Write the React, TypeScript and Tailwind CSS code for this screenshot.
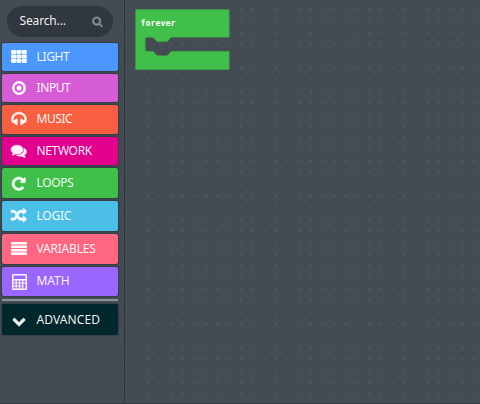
import type { ReactNode } from "react";

function Glyph({ d, className }: { d: string; className: string }) {
  return (
    <svg
      viewBox="0 0 1792 1792"
      className={`overflow-visible ${className}`}
      fill="currentColor"
      stroke="currentColor"
      strokeWidth="70"
      strokeLinejoin="round"
      aria-hidden="true"
    >
      <path d={d} />
    </svg>
  );
}

const SEARCH =
  "M1216 832q0-185-131.5-316.5t-316.5-131.5-316.5 131.5-131.5 316.5 131.5 316.5 316.5 131.5 316.5-131.5 131.5-316.5zm512 832q0 52-38 90t-90 38q-54 0-90-38l-343-342q-179 124-399 124-143 0-273.5-55.5t-225-150-150-225-55.5-273.5 55.5-273.5 150-225 225-150 273.5-55.5 273.5 55.5 225 150 150 225 55.5 273.5q0 220-124 399l343 343q37 37 37 90z";
const HEADPHONES =
  "M1728 886q0 166-60 314l-20 49-185 33q-22 83-90.5 136.5t-156.5 53.5v32q0 14-9 23t-23 9h-64q-14 0-23-9t-9-23v-576q0-14 9-23t23-9h64q14 0 23 9t9 23v32q71 0 130 35.5t93 95.5l68-12q29-95 29-193 0-148-88-279t-236.5-209-315.5-78-315.5 78-236.5 209-88 279q0 98 29 193l68 12q34-60 93-95.5t130-35.5v-32q0-14 9-23t23-9h64q14 0 23 9t9 23v576q0 14-9 23t-23 9h-64q-14 0-23-9t-9-23v-32q-88 0-156.5-53.5t-90.5-136.5l-185-33-20-49q-60-148-60-314 0-151 67-291t179-242.5 266-163.5 320-61 320 61 266 163.5 179 242.5 67 291z";
const COMMENTS =
  "M1408 768q0 139-94 257t-256.5 186.5-353.5 68.5q-86 0-176-16-124 88-278 128-36 9-86 16h-3q-11 0-20.5-8t-11.5-21q-1-3-1-6.5t.5-6.5 2-6l2.5-5 3.5-5.5 4-5 4.5-5 4-4.5q5-6 23-25t26-29.5 22.5-29 25-38.5 20.5-44q-124-72-195-177t-71-224q0-139 94-257t256.5-186.5 353.5-68.5 353.5 68.5 256.5 186.5 94 257zm384 256q0 120-71 224.5t-195 176.5q10 24 20.5 44t25 38.5 22.5 29 26 29.5 23 25q1 1 4 4.5t4.5 5 4 5 3.5 5.5l2.5 5 2 6 .5 6.5-1 6.5q-3 14-13 22t-22 7q-50-7-86-16-154-40-278-128-90 16-176 16-271 0-472-132 58 4 88 4 161 0 309-45t264-129q125-92 192-212t67-254q0-77-23-152 129 71 204 178t75 230z";
const REPEAT =
  "M1664 256v448q0 26-19 45t-45 19h-448q-42 0-59-40-17-39 14-69l138-138q-148-137-349-137-104 0-198.5 40.5t-163.5 109.5-109.5 163.5-40.5 198.5 40.5 198.5 109.5 163.5 163.5 109.5 198.5 40.5q119 0 225-52t179-147q7-10 23-12 15 0 25 9l137 138q9 8 9.5 20.5t-7.5 22.5q-109 132-264 204.5t-327 72.5q-156 0-298-61t-245-164-164-245-61-298 61-298 164-245 245-164 298-61q147 0 284.5 55.5t244.5 156.5l130-129q29-31 70-14 39 17 39 59z";
const RANDOM =
  "M666 481q-60 92-137 273-22-45-37-72.5t-40.5-63.5-51-56.5-63-35-81.5-14.5h-224q-14 0-23-9t-9-23v-192q0-14 9-23t23-9h224q250 0 410 225zm1126 799q0 14-9 23l-320 320q-9 9-23 9-13 0-22.5-9.5t-9.5-22.5v-192q-32 0-85 .5t-81 1-73-1-71-5-64-10.5-63-18.5-58-28.5-59-40-55-53.5-56-69.5q59-93 136-273 22 45 37 72.5t40.5 63.5 51 56.5 63 35 81.5 14.5h256v-192q0-14 9-23t23-9q12 0 24 10l319 319q9 9 9 23zm0-896q0 14-9 23l-320 320q-9 9-23 9-13 0-22.5-9.5t-9.5-22.5v-192h-256q-48 0-87 15t-69 45-51 61.5-45 77.5q-32 62-78 171-29 66-49.5 111t-54 105-64 100-74 83-90 68.5-106.5 42-128 16.5h-224q-14 0-23-9t-9-23v-192q0-14 9-23t23-9h224q48 0 87-15t69-45 51-61.5 45-77.5q32-62 78-171 29-66 49.5-111t54-105 64-100 74-83 90-68.5 106.5-42 128-16.5h256v-192q0-14 9-23t23-9q12 0 24 10l319 319q9 9 9 23z";
const CHEVRON =
  "M1683 808l-742 741q-19 19-45 19t-45-19l-742-741q-19-19-19-45.5t19-45.5l166-165q19-19 45-19t45 19l531 531 531-531q19-19 45-19t45 19l166 165q19 19 19 45.5t-19 45.5z";

function GridIcon() {
  return (
    <svg viewBox="0 0 16 13" className="-mt-px h-[13px] w-4" fill="currentColor">
      {[0, 4.4, 8.8].map((y) =>
        [0, 5.4, 10.8].map((x) => <rect key={`${x}-${y}`} x={x} y={y} width="5.1" height="4.1" rx="1.1" />),
      )}
    </svg>
  );
}

function TargetIcon() {
  return (
    <svg viewBox="0 0 14 14" className="size-3.5">
      <circle cx="7" cy="7" r="5.7" fill="none" stroke="currentColor" strokeWidth="2.4" />
      <circle cx="7" cy="7" r="2.5" fill="currentColor" />
    </svg>
  );
}

function LinesIcon() {
  return (
    <svg viewBox="0 0 16 13" className="h-[13px] w-4" fill="currentColor">
      {[0, 3.45, 6.9, 10.35].map((y) => (
        <rect key={y} y={y} width="16" height="2.6" rx="0.4" />
      ))}
    </svg>
  );
}

function CalculatorIcon() {
  return (
    <svg viewBox="0 0 15 16" className="mt-px h-4 w-[15px]">
      <path
        fill="currentColor"
        fillRule="evenodd"
        d="M1.5 0H13.5Q15 0 15 1.5V14.5Q15 16 13.5 16H1.5Q0 16 0 14.5V1.5Q0 0 1.5 0ZM1.5 1.6V5H13.5V1.6ZM1.5 6.6V8.4H3.6V6.6ZM4.8 6.6V8.4H6.9V6.6ZM8.1 6.6V8.4H10.2V6.6ZM11.4 6.6V8.4H13.5V6.6ZM1.5 9.6V11.4H3.6V9.6ZM4.8 9.6V11.4H6.9V9.6ZM8.1 9.6V11.4H10.2V9.6ZM1.5 12.6V14.4H3.6V12.6ZM4.8 12.6V14.4H6.9V12.6ZM8.1 12.6V14.4H10.2V12.6ZM11.4 9.6V14.4H13.5V9.6Z"
      />
    </svg>
  );
}

type CategoryProps = { label: string; box: string; text: string; icon: ReactNode };

const categories: CategoryProps[] = [
  { label: "LIGHT", box: "h-7 mb-[3px] bg-[#4c97ff]", text: "tracking-[-0.35px]", icon: <GridIcon /> },
  { label: "INPUT", box: "h-7 mb-[3px] bg-[#d65cd6]", text: "tracking-[-0.4px]", icon: <TargetIcon /> },
  { label: "MUSIC", box: "h-[28.5px] mb-[3px] bg-[#f85f40]", text: "tracking-[-0.45px]", icon: <Glyph d={HEADPHONES} className="size-4" /> },
  { label: "NETWORK", box: "h-[28.5px] mb-[3px] bg-[#e3008c]", text: "tracking-[-0.35px]", icon: <Glyph d={COMMENTS} className="size-[15.5px]" /> },
  { label: "LOOPS", box: "h-[29.5px] mb-[3.5px] bg-[#40bf4a]", text: "tracking-[-0.35px]", icon: <Glyph d={REPEAT} className="mt-px size-[15.5px]" /> },
  { label: "LOGIC", box: "h-[29.5px] mb-[3.5px] bg-[#4cbfe6]", text: "tracking-[-0.25px]", icon: <Glyph d={RANDOM} className="size-[15.5px]" /> },
  { label: "VARIABLES", box: "h-[29.5px] mb-[3px] bg-[#ff6680]", text: "tracking-[-0.2px]", icon: <LinesIcon /> },
  { label: "MATH", box: "h-[29.5px] bg-[#9966ff]", text: "tracking-[-0.05px]", icon: <CalculatorIcon /> },
];

function Category({ label, box, text, icon }: CategoryProps) {
  return (
    <div className={`flex w-[116px] items-center rounded-[2px] pl-[9px] text-white/95 shadow-[0_0_1px_1px_rgba(30,36,44,0.35)] ${box}`}>
      <span className="flex w-4 shrink-0 items-center justify-center">{icon}</span>
      <span className={`ml-[9.5px] text-xs leading-4 ${text}`}>{label}</span>
    </div>
  );
}

export default function App() {
  return (
    <div className="flex h-[404px] w-[480px] overflow-hidden border-b border-[#383e45] bg-[#434b53] font-['Noto_Sans','Open_Sans',sans-serif]">
      <aside className="flex w-[125px] shrink-0 flex-col border-r border-[#2e343a] pl-[2px]">
        <div className="mt-1.5 mb-1.5 ml-[5px] flex h-[31px] w-[106px] items-center justify-between rounded-full bg-[#31373e] pr-[10px] pl-[12.5px]">
          <span className="-mt-[2px] text-xs leading-4 tracking-[-0.15px] text-white/95">Search...</span>
          <Glyph d={SEARCH} className="size-[11px] text-[#8a8e93]" />
        </div>
        {categories.map((c) => (
          <Category key={c.label} {...c} />
        ))}
        <div className="my-[3px] h-[2px] w-[116px] shrink-0 bg-[#8d9196]" />
        <Category
          label="ADVANCED"
          box="h-[31px] bg-[#00272b]"
          text="tracking-[0.1px]"
          icon={<Glyph d={CHEVRON} className="mt-[2px] size-3.5" />}
        />
      </aside>
      <main className="relative flex-1 bg-[radial-gradient(circle_at_center,#5c636b_0.4px,transparent_1px)] bg-[length:11.67px_11.67px] bg-[position:5.3px_3.6px]">
        <div className="absolute top-[9px] left-[10px] h-[61px] w-[95px] text-white">
          <svg viewBox="0 0 95 61" className="absolute inset-0 h-[61px] w-[95px]">
            <path
              d="M1.5 .5H93.2Q94.2 .5 94.2 1.5V28.3H37.5C36 28.3 35.4 29 34.2 30.5S32.2 32.8 30.5 32.8H24C22.2 32.8 21.2 32 20 30.5S18.4 28.3 17 28.3H12Q10.3 28.3 10.3 30V40.5Q10.3 42.2 12 42.2H17C18.4 42.2 18.8 43 20 44.5S22.2 46.7 24 46.7H30.5C32.2 46.7 33 46 34.2 44.5S36 42.2 37.5 42.2H94.2V60Q94.2 60.8 93.2 60.8H1.5Q.5 60.8 .5 60V1.5Q.5 .5 1.5 .5Z"
              fill="#40bf4a"
              stroke="#3a9e45"
              strokeWidth=".6"
            />
          </svg>
          <span className="relative ml-[5.5px] block pt-[9px] font-['DejaVu_Sans_Mono',monospace] text-[8.3px] leading-[10px] font-bold">forever</span>
        </div>
      </main>
    </div>
  );
}
